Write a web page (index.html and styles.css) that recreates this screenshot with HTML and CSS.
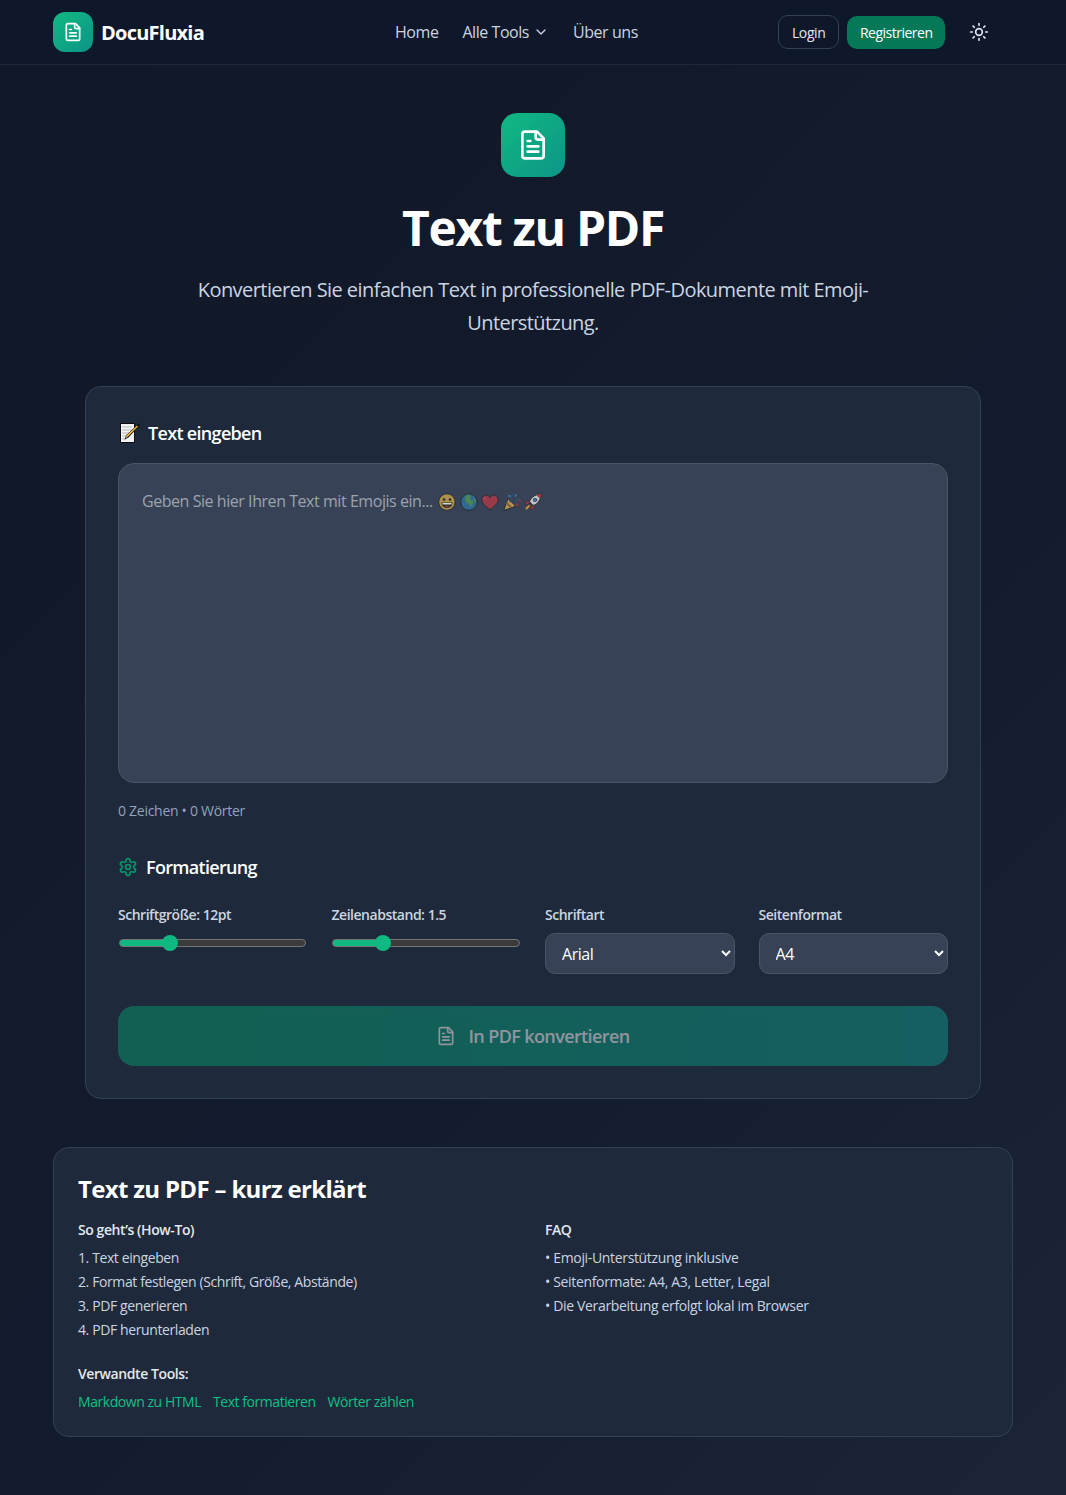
FILE: index.html
```html
<!DOCTYPE html>
<html lang="de">
  <head>
    <meta charset="UTF-8" />
    <meta name="viewport" content="width=device-width, initial-scale=1.0" />
    <title>Text zu PDF - DocuFluxia</title>
    <link rel="stylesheet" href="styles.css">
  </head>
  <body>
    <header class="topbar">
      <div class="topbar_inner">
        <a class="brand" href="#">
          <span class="brand_icon">
            <svg class="doc_icon" width="20" height="20" viewBox="0 0 24 24"><path d="M15 2H6a2 2 0 0 0-2 2v16a2 2 0 0 0 2 2h12a2 2 0 0 0 2-2V7z"/><path d="M14 2v4a2 2 0 0 0 2 2h4"/><path d="M10 9H8"/><path d="M16 13H8"/><path d="M16 17H8"/></svg>
          </span>
          <span class="brand_name">DocuFluxia</span>
        </a>
        <nav class="mainnav">
          <a href="#">Home</a>
          <a href="#" class="has_menu">Alle Tools
            <svg class="chevron" width="16" height="16" viewBox="0 0 24 24"><path d="m6 9 6 6 6-6"/></svg>
          </a>
          <a href="#">Über uns</a>
        </nav>
        <div class="topbar_actions">
          <button type="button" class="login_btn">Login</button>
          <button type="button" class="register_btn">Registrieren</button>
          <button type="button" class="theme_btn" aria-label="Theme">
            <svg width="20" height="20" viewBox="0 0 24 24"><circle cx="12" cy="12" r="4"/><path d="M12 2v2"/><path d="M12 20v2"/><path d="m4.93 4.93 1.41 1.41"/><path d="m17.66 17.66 1.41 1.41"/><path d="M2 12h2"/><path d="M20 12h2"/><path d="m6.34 17.66-1.41 1.41"/><path d="m19.07 4.93-1.41 1.41"/></svg>
          </button>
        </div>
      </div>
    </header>

    <main class="page">
      <section class="hero">
        <div class="hero_icon">
          <svg class="doc_icon" width="32" height="32" viewBox="0 0 24 24"><path d="M15 2H6a2 2 0 0 0-2 2v16a2 2 0 0 0 2 2h12a2 2 0 0 0 2-2V7z"/><path d="M14 2v4a2 2 0 0 0 2 2h4"/><path d="M10 9H8"/><path d="M16 13H8"/><path d="M16 17H8"/></svg>
        </div>
        <h1>Text zu PDF</h1>
        <p>Konvertieren Sie einfachen Text in professionelle PDF-Dokumente mit Emoji-Unterstützung.</p>
      </section>

      <section class="tool_card">
        <h2 class="section_title">
          <svg class="emoji memo" width="22" height="22" viewBox="0 0 22 22"><path fill="#0b0b0b" d="M2 1h15v20H2z"/><path fill="#f2f3f4" d="M3 2h13v18H3z"/><path fill="none" stroke="#b4b9bf" stroke-width="1" d="M4.500 5h9M4.500 8h9M4.500 11h7M4.500 14h4M4.500 17h3"/><path fill="#0b0b0b" d="M20.500 1.500l1 2-11 12-4 2 1.500-4z"/><path fill="#f2b632" d="M19 3.500l1 1-10.500 10.500-1.500-1z"/><path fill="#e8d9a8" d="M8 14l1.500 1-2 1z"/></svg>
          Text eingeben
        </h2>
        <div class="text_wrap">
          <textarea id="text_input" placeholder="Geben Sie hier Ihren Text mit Emojis ein..."></textarea>
          <div class="emoji_row">
            <svg class="emoji" width="18" height="18" viewBox="0 0 18 18"><circle cx="9" cy="9" r="8.300" fill="#b89a4c" stroke="#262b33"/><circle cx="6" cy="6.500" r="1.300" fill="#2f2a22"/><circle cx="12" cy="6.500" r="1.300" fill="#2f2a22"/><path fill="#2f2a22" d="M3.500 9.500h11c0 3.200-2.400 5.500-5.500 5.500s-5.500-2.300-5.500-5.500z"/><path fill="#e6e6e6" d="M4.500 10h9v1.500h-9z"/><path fill="#a8474a" d="M6.500 13.500c1-1 4-1 5 0-1.400 1-3.600 1-5 0z"/></svg>
            <svg class="emoji" width="18" height="18" viewBox="0 0 18 18"><circle cx="9" cy="9" r="8.300" fill="#2f6c9c" stroke="#262b33"/><path fill="#4c8f4f" d="M5.500 2.500 9 1.800l2.200 1.700-1.500 1.800.8 1.700 2.500.5.300 2.500-1.800 3-1.500 1.500-.8-3.500-2.700-1-1.500-2.500.5-2.500zM13.500 4.500l2.500 3 .3 2.500-2-1.500z"/></svg>
            <svg class="emoji" width="18" height="18" viewBox="0 0 18 18"><path fill="#a23a49" stroke="#262b33" d="M9 16.800C4 12.800.7 10 .7 6.500.7 4 3 2 5 2c1.700 0 3.100 1 4 2.500C9.900 3 11.300 2 13 2c2 0 4.300 2 4.300 4.500 0 3.500-3.300 6.300-8.300 10.300z"/><path fill="#c65a68" d="M3 6c0-1.500 1-2.200 2.500-2.200-.8.800-1.500 1.500-1.700 3z"/></svg>
            <svg class="emoji" width="18" height="18" viewBox="0 0 18 18"><path fill="#c2a150" stroke="#262b33" d="M.8 17.200 5 5.500l7.500 7.500z"/><path fill="#8d6a35" d="M4 8.500l5.500 5.500-2.500 1-4-4z"/><path fill="none" stroke="#2f4c6b" stroke-width="2.200" d="M7.500 8c1.500-2.500 0-4 2.500-6.500M11.500 9.500c1.500-1 2-3.500 4-3.500"/><circle cx="14" cy="11.500" r="1.500" fill="#8f3942"/><circle cx="6.500" cy="3" r="1.200" fill="#3f7fb0"/><path fill="#3f7fb0" d="M11.500 1l2.500 1-1.500 2.500z"/><path fill="#8f3942" d="M14 7.500l3.500-1 .5 2.500z"/></svg>
            <svg class="emoji" width="18" height="18" viewBox="0 0 18 18"><path fill="#cfd2d6" stroke="#262b33" d="M17.300.7C12 1 7.500 3.800 5.300 8.500l4.200 4.200c4.700-2.200 7.500-6.700 7.800-12z"/><path fill="#a9383f" d="M17.300.7c-1.900.1-3.600.5-5.100 1.300l3.800 3.800c.8-1.500 1.200-3.200 1.300-5.100z"/><circle cx="11" cy="7" r="1.800" fill="#3a78ac" stroke="#262b33" stroke-width=".6"/><path fill="#a9383f" stroke="#262b33" stroke-width=".5" d="M5.800 7.800 2.500 8.300.7 11.500l3.600-.4zM10.200 12.200l-.5 3.300-3.200 1.800.4-3.600z"/><path fill="#d0953a" stroke="#262b33" stroke-width=".5" d="M5 11.500l1.500 1.500-3.800 4.300-2-2z"/></svg>
          </div>
        </div>
        <p class="char_count">0 Zeichen • 0 Wörter</p>

        <h2 class="section_title format_title">
          <svg class="gear" width="20" height="20" viewBox="0 0 24 24"><path d="M12.220 2h-.44a2 2 0 0 0-2 2v.18a2 2 0 0 1-1 1.730l-.43.25a2 2 0 0 1-2 0l-.15-.08a2 2 0 0 0-2.730.73l-.22.380a2 2 0 0 0 .73 2.730l.15.100a2 2 0 0 1 1 1.720v.51a2 2 0 0 1-1 1.740l-.15.090a2 2 0 0 0-.73 2.730l.22.380a2 2 0 0 0 2.730.73l.15-.08a2 2 0 0 1 2 0l.43.25a2 2 0 0 1 1 1.730V20a2 2 0 0 0 2 2h.44a2 2 0 0 0 2-2v-.18a2 2 0 0 1 1-1.730l.43-.25a2 2 0 0 1 2 0l.15.080a2 2 0 0 0 2.730-.73l.22-.390a2 2 0 0 0-.73-2.730l-.15-.080a2 2 0 0 1-1-1.740v-.5a2 2 0 0 1 1-1.740l.15-.090a2 2 0 0 0 .73-2.730l-.22-.380a2 2 0 0 0-2.730-.73l-.15.080a2 2 0 0 1-2 0l-.43-.25a2 2 0 0 1-1-1.730V4a2 2 0 0 0-2-2z"/><circle cx="12" cy="12" r="3"/></svg>
          Formatierung
        </h2>
        <div class="format_grid">
          <div class="field">
            <label for="font_size">Schriftgröße: 12pt</label>
            <input type="range" id="font_size" min="8" max="24" value="12" />
          </div>
          <div class="field">
            <label for="line_height">Zeilenabstand: 1.5</label>
            <input type="range" id="line_height" min="1" max="3" step="0.1" value="1.5" />
          </div>
          <div class="field">
            <label for="font_family">Schriftart</label>
            <select id="font_family"><option>Arial</option><option>Times New Roman</option></select>
          </div>
          <div class="field">
            <label for="page_size">Seitenformat</label>
            <select id="page_size"><option>A4</option><option>A3</option><option>Letter</option><option>Legal</option></select>
          </div>
        </div>

        <button type="button" class="convert_btn" disabled>
          <svg class="doc_icon" width="20" height="20" viewBox="0 0 24 24"><path d="M15 2H6a2 2 0 0 0-2 2v16a2 2 0 0 0 2 2h12a2 2 0 0 0 2-2V7z"/><path d="M14 2v4a2 2 0 0 0 2 2h4"/><path d="M10 9H8"/><path d="M16 13H8"/><path d="M16 17H8"/></svg>
          In PDF konvertieren
        </button>
      </section>

      <section class="info_card">
        <h2>Text zu PDF – kurz erklärt</h2>
        <div class="info_grid">
          <div>
            <h3>So geht’s (How-To)</h3>
            <ol>
              <li>1. Text eingeben</li>
              <li>2. Format festlegen (Schrift, Größe, Abstände)</li>
              <li>3. PDF generieren</li>
              <li>4. PDF herunterladen</li>
            </ol>
          </div>
          <div>
            <h3>FAQ</h3>
            <ul>
              <li>• Emoji-Unterstützung inklusive</li>
              <li>• Seitenformate: A4, A3, Letter, Legal</li>
              <li>• Die Verarbeitung erfolgt lokal im Browser</li>
            </ul>
          </div>
        </div>
        <h3 class="related_title">Verwandte Tools:</h3>
        <div class="related_links">
          <a href="#">Markdown zu HTML</a>
          <a href="#">Text formatieren</a>
          <a href="#">Wörter zählen</a>
        </div>
      </section>
    </main>
  </body>
</html>
```

FILE: styles.css
```css
* {
  box-sizing: border-box;
  padding: 0;
  margin: 0;
  letter-spacing: -0.028em;
}
body {
  min-height: 1495px;
  background: linear-gradient(135deg, #111827, #131c2e 60%, #1b2537);
  color: #fff;
  font-family: "Open Sans", "Noto Sans", sans-serif;
  color-scheme: dark;
}
a {
  color: inherit;
  text-decoration: none;
}
svg {
  fill: none;
  stroke: currentColor;
  stroke-width: 2;
  stroke-linecap: round;
  stroke-linejoin: round;
  flex-shrink: 0;
}
svg.emoji {
  stroke: none;
  stroke-width: 1;
}

/* header */
.topbar {
  height: 65px;
  background: #0f172a;
  border-bottom: 1px solid #1e293b;
}
.topbar_inner {
  width: 960px;
  height: 64px;
  margin: 0 auto;
  display: flex;
  align-items: center;
}
.brand {
  display: flex;
  align-items: center;
  gap: 8px;
}
.brand_icon {
  width: 40px;
  height: 40px;
  border-radius: 12px;
  background: linear-gradient(135deg, #10b981, #0d9488);
  display: flex;
  align-items: center;
  justify-content: center;
}
.brand_name {
  font-size: 20px;
  font-weight: 700;
  letter-spacing: -0.038em;
}
.mainnav {
  margin-left: 191px;
  display: flex;
  align-items: center;
  gap: 24px;
  font-size: 16px;
  color: #cbd5e1;
}
.has_menu {
  display: flex;
  align-items: center;
  gap: 4px;
}
.topbar_actions {
  margin-left: auto;
  display: flex;
  align-items: center;
  gap: 8px;
  padding-right: 16px;
}
.topbar_actions button {
  font-family: inherit;
  font-size: 14px;
  cursor: pointer;
}
.login_btn {
  height: 34px;
  padding: 0 13px;
  border: 1px solid #334155;
  border-radius: 10px;
  background: transparent;
  color: #e2e8f0;
}
.register_btn {
  height: 33px;
  padding: 0 12.5px;
  border: none;
  border-radius: 10px;
  background: #047857;
  color: #fff;
  letter-spacing: -0.036em;
}
.theme_btn {
  width: 36px;
  height: 36px;
  margin-left: 8px;
  border: none;
  background: transparent;
  color: #e2e8f0;
  display: flex;
  align-items: center;
  justify-content: center;
}

/* hero */
.page {
  padding-top: 48px;
}
.hero {
  text-align: center;
}
.hero_icon {
  width: 64px;
  height: 64px;
  margin: 0 auto 23px;
  border-radius: 16px;
  background: linear-gradient(135deg, #10b981, #0d9488);
  display: flex;
  align-items: center;
  justify-content: center;
}
.hero h1 {
  font-size: 48px;
  line-height: 56px;
  font-weight: 700;
  margin-bottom: 18px;
}
.hero p {
  max-width: 680px;
  margin: 0 auto;
  font-size: 20px;
  line-height: 32.5px;
  color: #cbd5e1;
}

/* tool card */
.tool_card {
  width: 896px;
  margin: 47px auto 0;
  padding: 32px;
  background: #1e293b;
  border: 1px solid #334155;
  border-radius: 16px;
}
.section_title {
  display: flex;
  align-items: center;
  gap: 8px;
  font-size: 18px;
  line-height: 28px;
  font-weight: 600;
  letter-spacing: -0.038em;
}
.text_wrap {
  position: relative;
  margin-top: 16px;
}
textarea {
  display: block;
  width: 100%;
  height: 320px;
  padding: 24px 23px;
  resize: none;
  background: #374256;
  border: 1px solid #4a5568;
  border-radius: 16px;
  color: #fff;
  font-family: inherit;
  font-size: 16px;
  line-height: 26px;
}
textarea::placeholder {
  color: #9ca3af;
}
.emoji_row {
  position: absolute;
  top: 30px;
  left: 320px;
  display: flex;
  gap: 3.5px;
  opacity: 0.9;
}
.char_count {
  margin-top: 18px;
  font-size: 14px;
  line-height: 20px;
  color: #94a3b8;
  letter-spacing: -0.02em;
}
.format_title {
  margin-top: 32px;
}
.gear {
  color: #059669;
}
.format_grid {
  margin-top: 24px;
  display: grid;
  grid-template-columns: repeat(4, 1fr);
  gap: 24px;
}
.field label {
  display: block;
  margin-bottom: 8px;
  font-size: 14px;
  line-height: 20px;
  font-weight: 600;
  color: #cbd5e1;
  letter-spacing: -0.034em;
}
input[type="range"] {
  display: block;
  width: calc(100% - 2px);
  height: 8px;
  margin: 14px 0 0 0.5px;
  appearance: none;
  background: transparent;
}
input[type="range"]::-webkit-slider-runnable-track {
  box-sizing: border-box;
  height: 8px;
  border: 1px solid #757575;
  border-radius: 5px;
  background: linear-gradient(90deg, #10b981 27%, #3b3b3b 27%);
}
input[type="range"]::-webkit-slider-thumb {
  appearance: none;
  width: 16px;
  height: 16px;
  margin-top: -5px;
  border-radius: 50%;
  background: #10b981;
}
select {
  display: block;
  width: 100%;
  height: 41px;
  padding: 0 12px;
  background: #374256;
  border: 1px solid #4a5568;
  border-radius: 10px;
  color: #fff;
  font-family: inherit;
  font-size: 16px;
}
.convert_btn {
  margin-top: 32px;
  width: 100%;
  height: 60px;
  border: none;
  border-radius: 16px;
  background: linear-gradient(90deg, #059669, #0d9488);
  color: #fff;
  opacity: 0.5;
  font-family: inherit;
  font-size: 18px;
  font-weight: 600;
  letter-spacing: -0.034em;
  display: flex;
  align-items: center;
  justify-content: center;
  gap: 12px;
}

/* info */
.info_card {
  width: 960px;
  margin: 48px auto 0;
  padding: 25px 24px 24px;
  background: #1e293b;
  border: 1px solid #334155;
  border-radius: 16px;
}
.info_card h2 {
  font-size: 24px;
  line-height: 32px;
  font-weight: 700;
  margin-bottom: 15px;
}
.info_grid {
  display: grid;
  grid-template-columns: 1fr 1fr;
  gap: 24px;
}
.info_card h3 {
  font-size: 14px;
  line-height: 20px;
  font-weight: 600;
  color: #e2e8f0;
  margin-bottom: 6px;
  letter-spacing: -0.03em;
}
.info_card ol,
.info_card ul {
  list-style: none;
  font-size: 14px;
  line-height: 24px;
  color: #cbd5e1;
}
.info_card ul li {
  letter-spacing: -0.024em;
}
.info_card .related_title {
  margin-top: 22px;
  margin-bottom: 8px;
}
.related_links {
  display: flex;
  gap: 12px;
  font-size: 14px;
  line-height: 20px;
  color: #10c084;
}
.related_links a {
  letter-spacing: -0.032em;
}
```
